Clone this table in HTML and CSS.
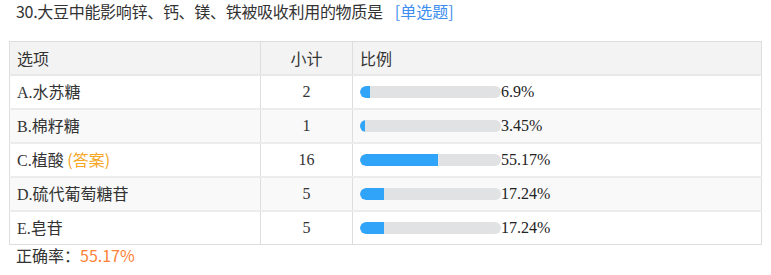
FILE: index.html
```html
<!DOCTYPE html>
<html>
<head>
<meta charset="utf-8">
<link rel="stylesheet" href="styles.css">
</head>
<body>
<div class="q">
  <div class="title"><span class="num">30.</span>大豆中能影响锌、钙、镁、铁被吸收利用的物质是<span class="type">[单选题]</span></div>
  <table class="tbl">
    <colgroup><col class="w-opt"><col class="w-cnt"><col class="w-pct"></colgroup>
    <thead>
      <tr><th class="c-opt">选项</th><th class="c-cnt">小计</th><th class="c-pct">比例</th></tr>
    </thead>
    <tbody>
      <tr><td class="c-opt"><span class="lat">A.</span>水苏糖</td><td class="c-cnt">2</td><td class="c-pct"><div class="bar"><span class="track"><span class="fill" style="width:6.9%"></span></span><span class="pv">6.9%</span></div></td></tr>
      <tr class="alt"><td class="c-opt"><span class="lat">B.</span>棉籽糖</td><td class="c-cnt">1</td><td class="c-pct"><div class="bar"><span class="track"><span class="fill" style="width:3.45%"></span></span><span class="pv">3.45%</span></div></td></tr>
      <tr><td class="c-opt"><span class="lat">C.</span>植酸 <span class="ans">(答案)</span></td><td class="c-cnt">16</td><td class="c-pct"><div class="bar"><span class="track"><span class="fill" style="width:55.17%"></span></span><span class="pv">55.17%</span></div></td></tr>
      <tr class="alt"><td class="c-opt"><span class="lat">D.</span>硫代葡萄糖苷</td><td class="c-cnt">5</td><td class="c-pct"><div class="bar"><span class="track"><span class="fill" style="width:17.24%"></span></span><span class="pv">17.24%</span></div></td></tr>
      <tr class="last"><td class="c-opt"><span class="lat">E.</span>皂苷</td><td class="c-cnt">5</td><td class="c-pct"><div class="bar"><span class="track"><span class="fill" style="width:17.24%"></span></span><span class="pv">17.24%</span></div></td></tr>
    </tbody>
  </table>
  <div class="rate">正确率：<span class="rv">55.17%</span></div>
</div>
</body>
</html>
```

FILE: styles.css
```css
html, body { margin: 0; padding: 0; background: #fff; }
body { font-family: "Noto Sans CJK SC", sans-serif; color: #333; font-size: 16px; }
.q { padding: 0 9px 0 9px; }
.title { padding: 0 0 0 7px; height: 41px; box-sizing: border-box; font-size: 16px; line-height: 22px; color: #333; letter-spacing: -0.3px; }
.type { color: #3d8ef0; margin-left: 12px; letter-spacing: 0; }
.tbl { width: 753px; table-layout: fixed; border-collapse: collapse; border: 1px solid #dddddd; }
.w-opt { width: 251px; }
.w-cnt { width: 92px; }
.tbl th, .tbl td { border-left: 1px solid #dddddd; border-right: 1px solid #dddddd; padding: 0 0 0 7px; font-weight: normal; text-align: left; white-space: nowrap; vertical-align: middle; }
.tbl th { background: #f3f3f3; line-height: 32px; height: 32px; border-bottom: 2px solid #e8e8e8; }
.tbl tbody td { border-bottom: 2px solid #ececec; line-height: 30px; height: 30px; }
.tbl tr.last td { border-bottom: 1px solid #dddddd; height: 32px; }
.tbl tr.alt td { background: #f9f9f9; }
.tbl .c-cnt { text-align: center; padding: 0; }
.tbl td.c-cnt { font-family: "Liberation Serif", serif; font-size: 16px; }
.lat { font-family: "Liberation Serif", serif; font-size: 16px; }
.ans { color: #f5a623; }
.bar { display: flex; align-items: center; height: 30px; }
.track { display: block; width: 141px; height: 12px; border-radius: 6px; background: #e1e2e4; overflow: hidden; }
.fill { display: block; height: 100%; background: #2fa4f9; border-radius: 6px 0 0 6px; }
.pv { font-family: "Liberation Serif", serif; font-size: 16px; color: #222; line-height: 20px; }
.rate { padding: 0 0 0 7px; font-size: 16px; line-height: 20px; color: #333; }
.rv { color: #ff7f36; }
```
